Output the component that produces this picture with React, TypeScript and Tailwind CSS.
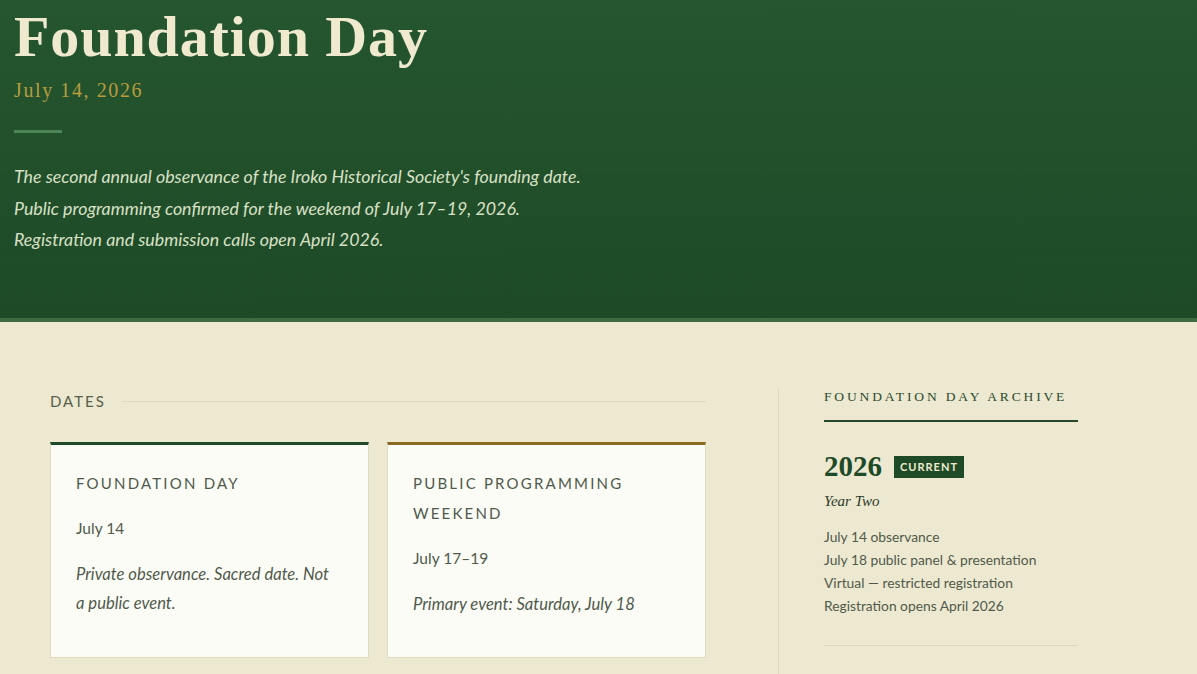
import React from 'react';

const serif = "font-['Liberation_Serif','Times_New_Roman',serif]";
const sans = "font-['Lato','Open_Sans',sans-serif]";

const dateCards = [
  {
    title: 'Foundation Day',
    date: 'July 14',
    note: 'Private observance. Sacred date. Not a public event.',
    accent: 'border-t-[#1f4a28]',
  },
  {
    title: 'Public Programming Weekend',
    date: 'July 17–19',
    note: 'Primary event: Saturday, July 18',
    accent: 'border-t-[#8a6a22]',
  },
];

const archiveItems = [
  'July 14 observance',
  'July 18 public panel & presentation',
  'Virtual — restricted registration',
  'Registration opens April 2026',
];

const App: React.FC = () => {
  return (
    <div className={`min-h-screen bg-[#ede8d0] ${sans}`}>
      <header className="h-[322px] bg-gradient-to-b from-[#25562f] to-[#1e4a27] border-b-4 border-[#3f6b3f] px-[14px] pt-[2px]">
        <h1 className={`${serif} font-bold text-[58px] leading-[70px] text-[#efeacd] tracking-[0.9px]`}>
          Foundation Day
        </h1>
        <p className={`${serif} mt-[4px] text-[20px] leading-[28px] tracking-[1.6px] text-[#b89c3e]`}>
          July 14, 2026
        </p>
        <div className="mt-[26px] h-[3px] w-[48px] bg-[#4b8556]" />
        <div className="mt-[28px] text-[17.8px] leading-[31.5px] italic text-[#d9e0c6]">
          <p>The second annual observance of the Iroko Historical Society's founding date.</p>
          <p>Public programming confirmed for the weekend of July 17–19, 2026.</p>
          <p>Registration and submission calls open April 2026.</p>
        </div>
      </header>

      <main className="flex pl-[50px] pt-[66px]">
        <section className="w-[656px] shrink-0">
          <div className="flex items-center gap-[16px] h-[26px]">
            <h2 className="text-[15px] tracking-[2px] text-[#56604c]">DATES</h2>
            <div className="flex-1 h-px bg-[#ddd7bd]" />
          </div>
          <div className="mt-[28px] grid grid-cols-2 gap-[18px]">
            {dateCards.map((card) => (
              <div
                key={card.title}
                className={`bg-[#fcfcf6] border border-[#e0dbc0] border-t-[3px] ${card.accent} pl-[25px] pr-[34px] pt-[23px] pb-[38px] min-h-[215px]`}
              >
                <h3 className="text-[15px] leading-[30px] tracking-[2.2px] uppercase text-[#4f5a4c]">
                  {card.title}
                </h3>
                <p className="mt-[18px] text-[15.5px] leading-[24px] text-[#4f5a4c]">{card.date}</p>
                <p className="mt-[20px] text-[16.6px] leading-[29px] italic text-[#4f5a4c]">{card.note}</p>
              </div>
            ))}
          </div>
        </section>

        <aside className="ml-[72px] w-[300px] border-l border-[#ddd6bc] pl-[45px] pr-[1px]">
          <div className="w-[254px]">
            <h2 className={`${serif} text-[13.5px] leading-[18px] tracking-[2.85px] text-[#2b4a2f]`}>
              FOUNDATION DAY ARCHIVE
            </h2>
            <div className="mt-[14px] h-[2px] bg-[#27482c]" />
            <div className="mt-[27px] flex items-center gap-[12px]">
              <span className={`${serif} font-bold text-[29px] leading-[34px] text-[#1f4a28]`}>2026</span>
              <span className="bg-[#1f4a28] text-[#efeacd] text-[11px] font-bold tracking-[1px] px-[6px] h-[22px] flex items-center mt-[2px]">
                CURRENT
              </span>
            </div>
            <p className={`${serif} italic text-[15px] leading-[22px] text-[#2a3a2a] mt-[7px]`}>Year Two</p>
            <ul className="mt-[13px] text-[13.8px] leading-[23px] text-[#4f5a4c]">
              {archiveItems.map((item) => (
                <li key={item}>{item}</li>
              ))}
            </ul>
            <div className="mt-[28px] h-px bg-[#ddd7bd]" />
          </div>
          <div className="h-[40px]" />
        </aside>
      </main>
    </div>
  );
};

export default App;
